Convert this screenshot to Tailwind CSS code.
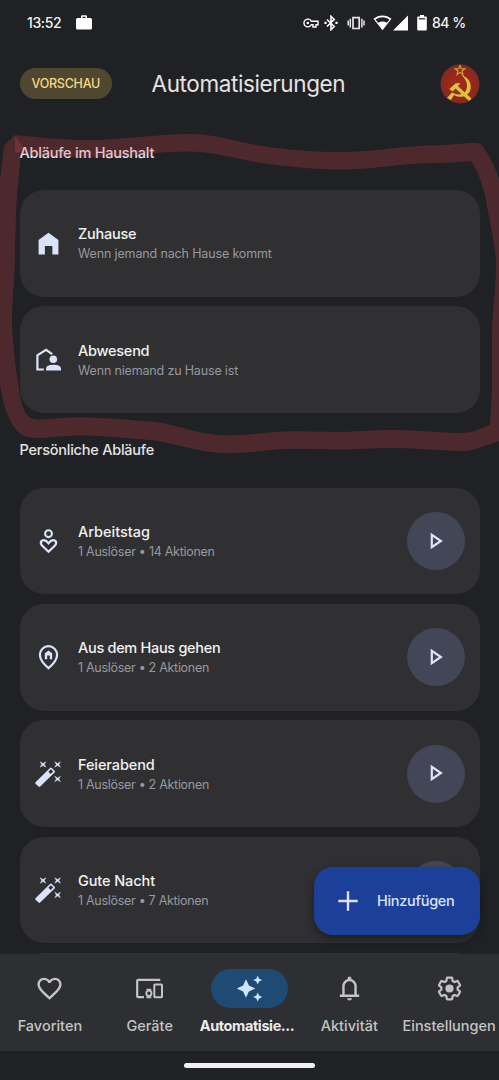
<!DOCTYPE html>
<html lang="de">
<head>
<meta charset="utf-8">
<title>Automatisierungen</title>
<script src="https://cdn.jsdelivr.net/npm/@tailwindcss/browser@4"></script>
</head>
<body class="bg-[#202124] font-['Inter','Roboto',sans-serif]">
<svg class="hidden">
  <defs>
    <symbol id="play" viewBox="0 0 29 29"><path d="M9.800 7.800v12.400L18.900 14z" fill="none" stroke="#dde3fb" stroke-width="2.200"/></symbol>
    <symbol id="wand" viewBox="0 0 29 29">
      <path d="M1.500 23.200 16 8.900q.9-.8 1.800 0l2.800 2.800q.9.900 0 1.800L6.200 27.600q-.8.700-1.600 0l-3.100-2.900q-.7-.8 0-1.500z" fill="#dbe2fb"/>
      <path d="M16.900 10.300l2.300 2.300-2.500 2.500-2.300-2.300z" fill="#303032"/>
      <path d="M6.100 2.700 9 4.400 11.900 2.700 10.300 5.400l1.600 2.800L9 6.600 6.100 8.200 7.700 5.400zM20.700 2.700l2.900 1.700 2.900-1.700-1.600 2.700 1.600 2.800-2.900-1.600-2.900 1.600 1.600-2.800zM20.700 17.200l2.900 1.700 2.900-1.700-1.600 2.700 1.600 2.800-2.900-1.600-2.900 1.600 1.600-2.800z" fill="#dbe2fb" stroke="#dbe2fb" stroke-width=".4"/>
    </symbol>
  </defs>
</svg>
<main class="relative flex h-[1080px] w-[499px] flex-col overflow-hidden">

  <!-- Status bar -->
  <header class="flex h-[45px] shrink-0 items-center pl-[27px] pr-[34px] text-[14px] font-medium text-[#f4f4f5]">
    <span class="w-[49px] tracking-[-0.4px]">13:52</span>
    <svg class="h-4 w-4" viewBox="0 0 16 16"><path d="M5 3V1.600Q5 .2 6.400.2h3.200Q11 .2 11 1.600V3h3.500Q16 3 16 4.500V13q0 1.500-1.500 1.500h-13Q0 14.500 0 13V4.500Q0 3 1.500 3zM6.500 3h3V1.700h-3z" fill="#fff"/></svg>
    <span class="grow"></span>
    <svg class="mr-[5px] h-4 w-4" viewBox="0 0 16 16"><path d="M8.300 6.200A3.900 3.900 0 1 0 8.300 9.800H10V12h3V9.800h2V6.200z" fill="none" stroke="#fff" stroke-width="1.400"/><circle cx="4.800" cy="8" r="1.300" fill="#fff"/></svg>
    <svg class="mr-[9px] h-4 w-[14px]" viewBox="0 0 14 16"><path d="M3 4.500l7.200 7L7 14.700V1.300l3.200 3.200L3 11.500" fill="none" stroke="#fff" stroke-width="1.600"/><path d="M.4 6.800h2.200v2.200H.4zM11.400 6.800h2.200v2.200h-2.200z" fill="#fff"/></svg>
    <svg class="mr-2 h-4 w-[18px]" viewBox="0 0 18 16"><path d="M6 2.700h6.200v10.800H6z" fill="none" stroke="#e6e6e6" stroke-width="1.700"/><path d="M3.300 3.800v8.600M1.200 5.600v5M14.900 3.800v8.600M17 5.600v5" stroke="#e6e6e6" stroke-width="1.500"/></svg>
    <svg class="mr-[1px] h-4 w-[19px]" viewBox="0 0 19 16"><path d="M9.500.4Q14.400.4 18.500 3.800L9.500 15.200.5 3.800Q4.600.4 9.500.4z" fill="#fff"/><path d="M9.500 2.200q3.800 0 7 2.200l-2.700 3.300Q9.500 5.200 5.200 7.700L2.500 4.400Q5.700 2.200 9.500 2.200z" fill="#202124"/></svg>
    <svg class="mr-[9px] h-4 w-[15px]" viewBox="0 0 15 16"><path d="M15 .5v15H0z" fill="#fff"/></svg>
    <svg class="mr-[5px] h-4 w-[10px]" viewBox="0 0 10 16"><path d="M3 0h4v1.500h1.800q1 0 1 1v12q0 1-1 1H1.200q-1 0-1-1v-12q0-1 1-1H3z" fill="#fff"/><path d="M1.800 3.200h6.400v1.200H1.800z" fill="#202124"/></svg>
    <span class="w-[33px] whitespace-nowrap tracking-[-0.5px]">84 %</span>
  </header>

  <!-- Title bar -->
  <div class="flex h-[77px] shrink-0 items-center pl-[19.500px] pr-[19px]">
    <span class="flex h-[31px] w-[92.500px] items-center justify-center rounded-full bg-[#504730] pt-px text-[12.500px] font-medium tracking-[-0.25px] text-[#f4d983]">VORSCHAU</span>
    <h1 class="ml-[39.500px] grow whitespace-nowrap pt-[2px] text-[22.500px] leading-none tracking-[-0.39px] text-[#e3e3e3]">Automatisierungen</h1>
    <svg class="h-10 w-10" viewBox="0 0 40 40">
      <defs><radialGradient id="red"><stop offset="0" stop-color="#a32a1e"/><stop offset=".8" stop-color="#922719"/><stop offset="1" stop-color="#7b2c25"/></radialGradient><clipPath id="disc"><circle cx="20" cy="20" r="19.500"/></clipPath></defs>
      <circle cx="20" cy="20" r="19.500" fill="url(#red)"/>
      <g clip-path="url(#disc)">
        <path d="M20 1.300l1.200 3.500h3.700l-3 2.200 1.100 3.500-3-2.100-3 2.100L18.100 7l-3-2.200h3.700z" fill="none" stroke="#d5a23a" stroke-width="1.100"/>
        <path d="M20.800 10.800C29 13.500 32.300 20.500 30.200 26.500C27.500 33 19.500 34.500 14 31L11 36L7 34L12 28.500C17 31.500 23.500 31 26 26.500C28.500 21.500 26.500 15 20.800 10.800z" fill="#dcc43f"/>
        <path d="M9.300 25L15.800 19.200H20.500L17.800 22L31.500 34.500L29.200 37L15.500 24.500L12.700 27.500z" fill="#dcc43f"/>
      </g>
    </svg>
  </div>

  <!-- Household routines -->
  <h2 class="flex h-[68.200px] shrink-0 items-start pt-[21px] pl-[19.500px] text-[14.500px] leading-[20px] font-medium tracking-[-0.23px] text-[#e3e3e3]"><span class="whitespace-nowrap">Abläufe im Haushalt</span></h2>
  <section class="flex shrink-0 flex-col gap-[9.700px] px-[19.500px]">
    <article class="flex h-[106.600px] items-center rounded-[24px] bg-[#303032] pl-[14.500px]">
      <svg class="h-[29px] w-[29px]" viewBox="0 0 24 24"><path d="M3.800 21V9L12 3l8.200 6v12h-5v-7H9v7z" fill="#dbe2fb"/></svg>
      <div class="ml-[15px] whitespace-nowrap pt-[2px]">
        <h3 class="text-[14.500px] leading-[20px] font-medium tracking-[-0.25px] text-[#f1f1f1]">Zuhause</h3>
        <p class="text-[12.500px] leading-[20px] tracking-[-0.14px] text-[#96999f]">Wenn jemand nach Hause kommt</p>
      </div>
    </article>
    <article class="flex h-[106.600px] items-center rounded-[24px] bg-[#303032] pl-[14.500px]">
      <svg class="h-[29px] w-[29px]" viewBox="0 0 29 29"><path d="M9.800 24.500H3.400V10.300L12 4.800l6.200 4.400" fill="none" stroke="#dbe2fb" stroke-width="2.200"/><circle cx="19.300" cy="14.300" r="3.800" fill="#dbe2fb"/><path d="M12 25.600V23.500Q12 19.700 19.500 19.700T27 23.500v2.100z" fill="#dbe2fb"/></svg>
      <div class="ml-[15px] whitespace-nowrap pt-[2px]">
        <h3 class="text-[14.500px] leading-[20px] font-medium tracking-[-0.25px] text-[#f1f1f1]">Abwesend</h3>
        <p class="text-[12.500px] leading-[20px] tracking-[-0.16px] text-[#96999f]">Wenn niemand zu Hause ist</p>
      </div>
    </article>
  </section>

  <!-- Personal routines -->
  <h2 class="flex h-[74.700px] shrink-0 items-start pt-[27px] pl-[19.500px] text-[14.500px] leading-[20px] font-medium tracking-[-0.23px] text-[#e3e3e3]"><span class="whitespace-nowrap">Persönliche Abläufe</span></h2>
  <section class="flex shrink-0 flex-col gap-[9.700px] px-[19.500px]">
    <article class="flex h-[106.600px] items-center rounded-[24px] bg-[#303032] pr-[14.500px] pl-[14.500px]">
      <svg class="h-[29px] w-[29px]" viewBox="0 0 29 29"><circle cx="14.500" cy="6.700" r="3.400" fill="none" stroke="#dbe2fb" stroke-width="2.100"/><path d="M14.500 24.700L8 18.500Q5.800 15.800 7.700 13.900 10.800 11.800 14.500 16.200 18.200 11.800 21.300 13.900 23.200 15.800 21 18.500z" fill="none" stroke="#dbe2fb" stroke-width="2.200"/></svg>
      <div class="ml-[15px] grow whitespace-nowrap pt-[2px]">
        <h3 class="text-[14.500px] leading-[20px] font-medium text-[#f1f1f1]">Arbeitstag</h3>
        <p class="text-[12.500px] leading-[20px] tracking-[-0.27px] text-[#96999f]">1 Auslöser • 14 Aktionen</p>
      </div>
      <button class="flex h-[58px] w-[58px] items-center justify-center rounded-full bg-[#424657]"><svg class="h-[29px] w-[29px]"><use href="#play"/></svg></button>
    </article>
    <article class="flex h-[106.600px] items-center rounded-[24px] bg-[#303032] pr-[14.500px] pl-[14.500px]">
      <svg class="h-[29px] w-[29px]" viewBox="0 0 29 29"><path d="M14.500 25.200Q5.900 18 5.900 11.800A8.600 8.600 0 0 1 23.100 11.800Q23.100 18 14.500 25.200z" fill="none" stroke="#dbe2fb" stroke-width="2.200"/><path d="M10.800 16.300V10.300l3.700-2.700 3.700 2.700v6h-2.400v-3.700h-2.600v3.700z" fill="#dbe2fb"/></svg>
      <div class="ml-[15px] grow whitespace-nowrap pt-[2px]">
        <h3 class="text-[14.500px] leading-[20px] font-medium tracking-[-0.3px] text-[#f1f1f1]">Aus dem Haus gehen</h3>
        <p class="text-[12.500px] leading-[20px] tracking-[-0.29px] text-[#96999f]">1 Auslöser • 2 Aktionen</p>
      </div>
      <button class="flex h-[58px] w-[58px] items-center justify-center rounded-full bg-[#424657]"><svg class="h-[29px] w-[29px]"><use href="#play"/></svg></button>
    </article>
    <article class="flex h-[106.600px] items-center rounded-[24px] bg-[#303032] pr-[14.500px] pl-[14.500px]">
      <svg class="h-[29px] w-[29px]"><use href="#wand"/></svg>
      <div class="ml-[15px] grow whitespace-nowrap pt-[2px]">
        <h3 class="text-[14.500px] leading-[20px] font-medium tracking-[-0.1px] text-[#f1f1f1]">Feierabend</h3>
        <p class="text-[12.500px] leading-[20px] tracking-[-0.29px] text-[#96999f]">1 Auslöser • 2 Aktionen</p>
      </div>
      <button class="flex h-[58px] w-[58px] items-center justify-center rounded-full bg-[#424657]"><svg class="h-[29px] w-[29px]"><use href="#play"/></svg></button>
    </article>
    <article class="flex h-[106.600px] items-center rounded-[24px] bg-[#303032] pr-[14.500px] pl-[14.500px]">
      <svg class="h-[29px] w-[29px]"><use href="#wand"/></svg>
      <div class="ml-[15px] grow whitespace-nowrap pt-[2px]">
        <h3 class="text-[14.500px] leading-[20px] font-medium tracking-[-0.1px] text-[#f1f1f1]">Gute Nacht</h3>
        <p class="text-[12.500px] leading-[20px] tracking-[-0.29px] text-[#96999f]">1 Auslöser • 7 Aktionen</p>
      </div>
      <button class="h-[58px] w-[58px] rounded-full bg-[#424657]"></button>
    </article>
    <article class="h-[106.600px] rounded-[24px] bg-[#303032]"></article>
  </section>

  <!-- Floating action button -->
  <button class="absolute top-[867px] left-[314px] flex h-[68px] w-[166px] items-center rounded-[19px] bg-[#1c409a] pl-[24px] text-[14.500px] font-medium text-[#dbe2fb] shadow-[0_4px_10px_rgba(0,0,0,0.4)]">
    <svg class="h-5 w-5" viewBox="0 0 20 20"><path d="M10 .3v19.400M.3 10h19.400" stroke="#dbe2fb" stroke-width="2.400"/></svg>
    <span class="ml-[19px] tracking-[-0.3px]">Hinzufügen</span>
  </button>

  <!-- Bottom navigation -->
  <footer class="absolute inset-x-0 bottom-0 bg-[#202124]">
    <nav class="grid h-[97px] grid-cols-5 bg-[#2e2f33] text-[14.500px] font-medium text-[#c4c4c2]">
      <a class="flex flex-col items-center pt-[14.500px]">
        <span class="flex h-[39px] items-center"><svg class="h-[29px] w-[29px]" viewBox="0 0 24 24"><path d="M16.500 3c-1.740 0-3.410.81-4.500 2.090C10.910 3.810 9.240 3 7.500 3 4.420 3 2 5.420 2 8.500c0 3.780 3.400 6.860 8.550 11.540L12 21.350l1.450-1.320C18.600 15.360 22 12.280 22 8.500 22 5.420 19.580 3 16.500 3zm-4.400 15.550l-.1.100-.1-.1C7.140 14.240 4 11.390 4 8.500 4 6.500 5.500 5 7.500 5c1.540 0 3.040.99 3.570 2.360h1.870C13.460 5.990 14.960 5 16.500 5c2 0 3.500 1.500 3.500 3.500 0 2.890-3.140 5.740-7.900 10.050z" fill="#c4c4c2"/></svg></span>
        <span class="mt-[8.500px] leading-[20px]">Favoriten</span>
      </a>
      <a class="flex flex-col items-center pt-[14.500px]">
        <span class="flex h-[39px] items-center"><svg class="h-[29px] w-[29px]" viewBox="0 0 29 29"><path d="M25.300 5.900H3.100Q2.200 5.900 2.200 6.800V22.200Q2.200 23.100 3.100 23.100H9" fill="none" stroke="#c4c4c2" stroke-width="2.200"/><rect x="19.300" y="10.500" width="7.700" height="12.700" rx=".6" fill="none" stroke="#c4c4c2" stroke-width="2"/><circle cx="13.900" cy="19.300" r="2.600" fill="none" stroke="#c4c4c2" stroke-width="1.800"/><path d="M11.500 14.700h4.800v1.800h-4.800zM11.500 22.300h4.800v1.900h-4.800z" fill="#c4c4c2"/></svg></span>
        <span class="mt-[8.500px] leading-[20px]">Geräte</span>
      </a>
      <a class="flex flex-col items-center pt-[14.500px]">
        <span class="flex h-[39px] w-[77.500px] items-center justify-center rounded-full bg-[#1e4a73]"><svg class="h-[29px] w-[29px]" viewBox="0 0 29 29"><path d="M11 5.300l2.900 6.300 6.300 2.900-6.300 2.900L11 23.700l-2.900-6.300-6.300-2.900 6.300-2.900zM22.700 1.600l1.400 3.100 3.100 1.400-3.100 1.400-1.400 3.100-1.400-3.100-3.100-1.400 3.100-1.400zM22.700 18.500l1.400 3.100 3.100 1.400-3.100 1.400-1.400 3.100-1.400-3.100-3.100-1.400 3.100-1.400z" fill="#cbe6ff"/></svg></span>
        <span class="mt-[8.500px] pr-[6px] pl-[1px] leading-[20px] font-bold tracking-[-0.4px] whitespace-nowrap text-[#ebebeb]">Automatisie...</span>
      </a>
      <a class="flex flex-col items-center pt-[14.500px]">
        <span class="flex h-[39px] items-center"><svg class="h-[29px] w-[29px]" viewBox="0 0 24 24"><path d="M4 19v-2h2v-7q0-2.075 1.250-3.688T10.500 4.200v-.7q0-.625.438-1.063T12 2q.625 0 1.063.438T13.500 3.500v.7q2 .5 3.250 2.113T18 10v7h2v2zm8 3q-.825 0-1.412-.587T10 20h4q0 .825-.587 1.413T12 22zm-4-5h8v-7q0-1.650-1.175-2.825T12 6 9.175 7.175 8 10z" fill="#c4c4c2"/></svg></span>
        <span class="mt-[8.500px] leading-[20px]">Aktivität</span>
      </a>
      <a class="flex flex-col items-center pt-[14.500px]">
        <span class="flex h-[39px] items-center"><svg class="h-[29px] w-[29px]" viewBox="0 0 24 24"><path transform="translate(1.200 1.200) scale(.9)" d="M19.430 12.980c.04-.32.07-.64.07-.98 0-.34-.03-.66-.07-.98l2.110-1.650c.19-.15.24-.42.12-.64l-2-3.460c-.09-.16-.26-.25-.44-.25-.06 0-.12.01-.17.03l-2.490 1c-.52-.4-1.080-.73-1.690-.98l-.38-2.650C14.460 2.180 14.250 2 14 2h-4c-.25 0-.46.18-.49.42l-.38 2.650c-.61.25-1.170.59-1.690.98l-2.490-1c-.06-.02-.12-.03-.18-.03-.17 0-.34.09-.43.25l-2 3.460c-.13.22-.07.49.12.64l2.110 1.650c-.04.32-.07.65-.07.98 0 .33.03.66.07.98l-2.110 1.650c-.19.15-.24.42-.12.64l2 3.460c.09.16.26.25.44.25.06 0 .12-.01.17-.03l2.490-1c.52.4 1.080.73 1.690.98l.38 2.650c.03.24.24.42.49.42h4c.25 0 .46-.18.49-.42l.38-2.650c.61-.25 1.170-.59 1.690-.98l2.490 1c.06.02.12.03.18.03.17 0 .34-.09.43-.25l2-3.460c.12-.22.07-.49-.12-.64z" fill="none" stroke="#c4c4c2" stroke-width="2"/><circle cx="12" cy="12" r="3.400" fill="#c4c4c2"/></svg></span>
        <span class="mt-[8.500px] leading-[20px] whitespace-nowrap">Einstellungen</span>
      </a>
    </nav>
    <div class="flex h-[29px] justify-center pt-[12px]"><span class="h-[5px] w-[131px] rounded-full bg-[#f1f0f0]"></span></div>
  </footer>

  <!-- Marker line around the household routines -->
  <svg class="pointer-events-none absolute inset-0 h-[1080px] w-[499px]" viewBox="0 0 499 1080">
    <g fill="#ec4a51" fill-opacity=".22">
      <path d="M15 135C45 138 65 140 90 140C125 140 155 134 190 134C218 134 235 142 262 146C290 150 315 152 342 152C375 152 400 146 430 145.500C450 145.500 460 143 476 143Q481 143 483 147C492 160 496 169 500 182V441L491 444C482 446 475 451 462 451C440 451 420 448 395 448C370 448 355 449.500 335 449.500C315 449.500 300 448.500 285 449C265 450 250 453 230 453C195 453 175 442 150 440C125 438 105 435.500 80 435.500C60 435.500 50 438 37 438C25 438 19 434 15 428C7 418 3 402 0 385V180L4 145.500zM15 153C45 157 65 157.500 95 157.500C130 157 155 151.500 190 151.500C218 152 235 159 262 163C290 167 315 169.500 342 169.500C375 169.500 400 163.500 430 163C450 163 458 162 471 161C477 170 481 180 485 195C490 225 496 245 496 265C496 295 492 310 492 340V390L490 425C480 428 475 433 460 433C440 433 420 430 395 430C370 430 355 432 335 432C315 432 300 431 285 431.500C265 432 250 435.500 230 435.500C195 435.500 175 423 150 421.500C125 420 105 417.500 80 417.500C60 417.500 50 419.500 40 419.500Q30 419.500 26 414C19 402 19 385 16 370C14 350 12 335 12 320C12 300 15 275 15 250C16 220 16 200 18 185L21 152.500z" fill-rule="evenodd"/>
      <path d="M15 136l8.500 12-4.500 5h-4z"/>
    </g>
  </svg>
</main>
</body>
</html>
